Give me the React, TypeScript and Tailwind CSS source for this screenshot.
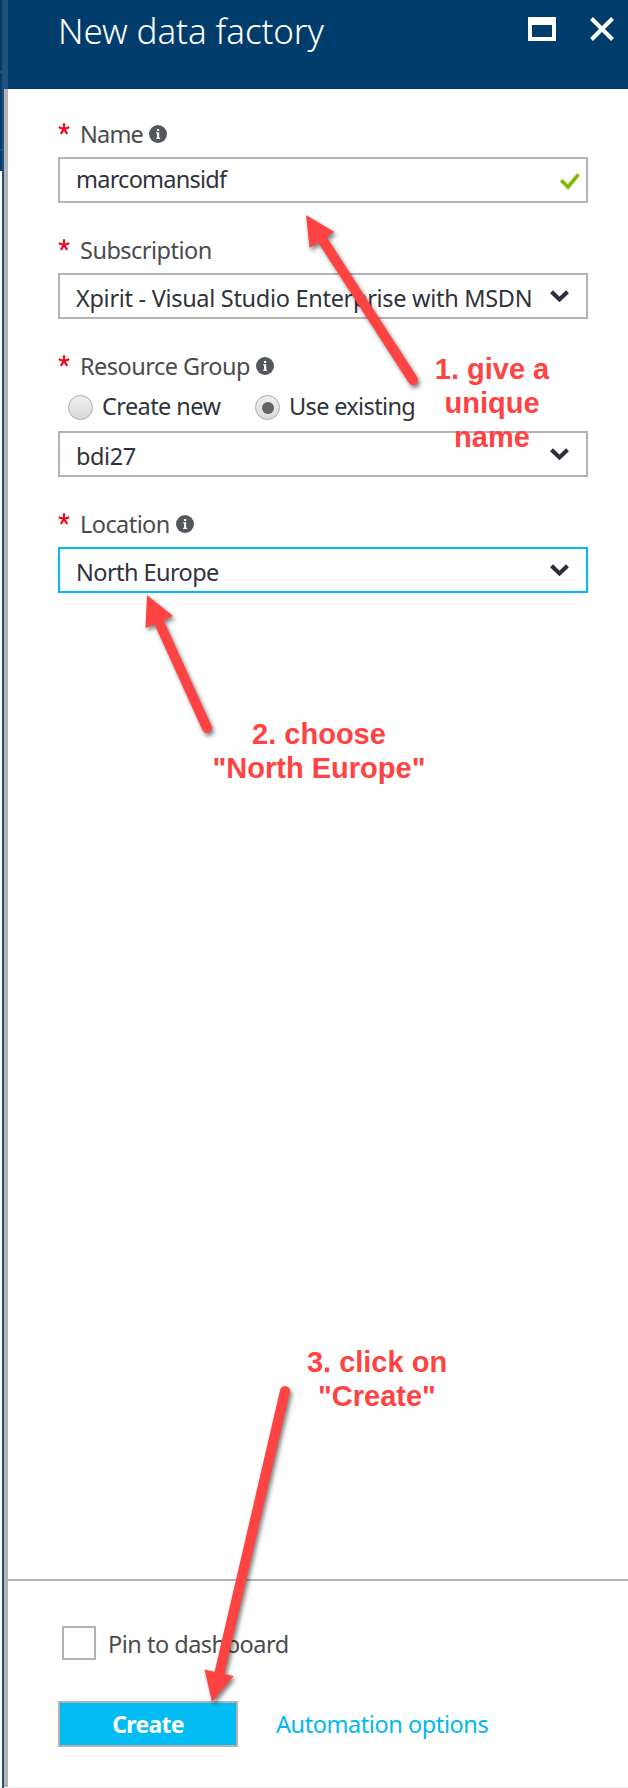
import React from "react";

const bodyFont = "font-['Noto_Sans',sans-serif]";

function InfoIcon({ className = "" }: { className?: string }) {
  return (
    <svg className={`h-[18px] w-[18px] shrink-0 ${className}`} viewBox="0 0 18 18">
      <circle cx="9" cy="9" r="9" fill="#54585e" />
      <path d="M8 4h2.200v2H8zM7.200 7.300h3v5.500h.9V14H7.200v-1.200H8V8.500h-.8z" fill="#fff" />
    </svg>
  );
}

function Chevron() {
  return (
    <svg className="h-3 w-[19px] shrink-0" viewBox="0 0 19 12">
      <path d="M1.500 1.800L9.500 9.400L17.500 1.800" fill="none" stroke="#2b303a" strokeWidth="4.200" />
    </svg>
  );
}

function Label({ text, spacing, info }: { text: string; spacing: string; info?: boolean }) {
  return (
    <div className="flex h-[46px] items-center text-[#4b4b4d]">
      <svg className="mb-[11px] h-3 w-3 shrink-0" viewBox="0 0 12 12">
        <path d="M6 6V.3M6 6L.7 4.200M6 6l5.300-1.800M6 6l-3.200 4.800M6 6l3.200 4.800" stroke="#f5041f" strokeWidth="2.200" fill="none" />
      </svg>
      <span className={`ml-[10px] whitespace-nowrap pt-0.5 text-[23.5px] ${spacing}`}>{text}</span>
      {info && <InfoIcon className="ml-1.5" />}
    </div>
  );
}

function Select({ value, spacing, active }: { value: string; spacing: string; active?: boolean }) {
  return (
    <div className={`flex h-[46px] items-center justify-between border-2 pl-4 pr-[17px] ${active ? "border-[#00bcf2]" : "border-[#b3b3b3]"}`}>
      <span className={`whitespace-nowrap pt-1 text-[23.5px] leading-8 ${spacing}`}>{value}</span>
      <Chevron />
    </div>
  );
}

function Radio({ label, spacing, checked, className = "" }: { label: string; spacing: string; checked?: boolean; className?: string }) {
  return (
    <div className={`flex items-center ${className}`}>
      <span className="mt-[3px] flex h-[25px] w-[25px] items-center justify-center rounded-full border border-[#ababab] bg-linear-to-b from-[#efefef] to-[#dadada]">
        {checked && <span className="h-3 w-3 rounded-full bg-[#636363]" />}
      </span>
      <span className={`ml-[9px] whitespace-nowrap text-[23.5px] leading-8 ${spacing}`}>{label}</span>
    </div>
  );
}

function Arrows() {
  return (
    <svg className="pointer-events-none absolute inset-0 h-[1788px] w-[628px] [filter:drop-shadow(2px_3px_2px_rgba(0,0,0,0.5))]" viewBox="0 0 628 1788">
      <g stroke="#ff4343" strokeWidth="10" strokeLinecap="round">
        <path d="M413 380L320 236" />
        <path d="M207 728L158 620" />
        <path d="M285 1391L219 1675" />
      </g>
      <g fill="#ff4343">
        <path d="M306 215L334.500 232L309.500 248Z" />
        <path d="M147 595L173 616L145.500 628Z" />
        <path d="M212 1702L204.500 1669.500L233.500 1676Z" />
      </g>
    </svg>
  );
}

function Note({ lines, className }: { lines: string[]; className: string }) {
  return (
    <div className={`absolute flex -translate-x-1/2 flex-col items-center whitespace-nowrap font-['Liberation_Sans',sans-serif] text-[29px] font-bold leading-[34px] text-[#ff4343] ${className}`}>
      {lines.map((line) => (
        <span key={line}>{line}</span>
      ))}
    </div>
  );
}

export default function App() {
  return (
    <div className={`relative flex h-[1788px] w-[628px] overflow-hidden bg-white text-[#2f333b] ${bodyFont}`}>
      <div className="flex w-0.5 flex-col">
        <div className="h-[71px] bg-[#003c6c]" />
        <div className="h-0.5 bg-[#1f517c]" />
        <div className="h-[76px] bg-[#003c6c]" />
        <div className="h-0.5 bg-[#1f517c]" />
        <div className="h-5 bg-[#003c6c]" />
      </div>
      <div className="w-0.5 bg-[#1f517c]" />
      <div className="flex w-1 flex-col">
        <div className="h-[89px] bg-[#1f517c]" />
        <div className="h-[1698px] bg-[#b3b3b3]" />
      </div>
      <div className="flex flex-1 flex-col border-b border-[#ececec]">
        <header className="flex h-[89px] items-start justify-between bg-[#003c6c] pl-[50px] pr-3.5 text-white">
          <h1 className="mt-[5px] whitespace-nowrap text-[35px] font-light leading-[52px] tracking-[-0.1px]">New data factory</h1>
          <div className="mt-[17px] flex gap-[34px]">
            <svg className="h-6 w-7" viewBox="0 0 28 24">
              <path d="M0 0H28V24H0ZM4 8V20H24V8Z" fill="#fff" fillRule="evenodd" />
            </svg>
            <svg className="h-6 w-6" viewBox="0 0 24 24">
              <path d="M1.500 1.500L22.500 22.500M22.500 1.500L1.500 22.500" stroke="#fff" strokeWidth="4" />
            </svg>
          </div>
        </header>
        <main className="flex flex-1 flex-col gap-6 pl-[50px] pr-10 pt-[22px]">
          <section>
            <Label text="Name" spacing="tracking-[-0.8px]" info />
            <div className="flex h-[46px] items-center justify-between border-2 border-[#b3b3b3] pl-4 pr-1.5">
              <span className="whitespace-nowrap pb-0.5 text-[23.5px] leading-8 tracking-[-0.76px]">marcomansidf</span>
              <svg className="mt-0.5 h-[17px] w-5" viewBox="0 0 20 17">
                <path d="M1.300 7.300L8 14L18.500 1.300" fill="none" stroke="#7fba00" strokeWidth="3.600" />
              </svg>
            </div>
          </section>
          <section>
            <Label text="Subscription" spacing="tracking-[-0.52px]" />
            <Select value="Xpirit - Visual Studio Enterprise with MSDN" spacing="tracking-[-0.3px]" />
          </section>
          <section>
            <Label text="Resource Group" spacing="tracking-[-0.53px]" info />
            <div className="flex h-[42px] items-center pb-2 pl-2.5">
              <Radio label="Create new" spacing="tracking-[-0.58px]" className="w-[187px]" />
              <Radio label="Use existing" spacing="tracking-[-0.65px]" checked />
            </div>
            <Select value="bdi27" spacing="tracking-[-0.4px]" />
          </section>
          <section>
            <Label text="Location" spacing="tracking-[-0.57px]" info />
            <Select value="North Europe" spacing="tracking-[-0.57px]" active />
          </section>
        </main>
        <footer className="flex h-[208px] flex-col border-t-2 border-[#b3b3b3] pl-[50px] pt-[45px]">
          <div className="flex h-[34px] items-center pl-1">
            <span className="h-[34px] w-[34px] border-2 border-[#b3b3b3]" />
            <span className="ml-3 whitespace-nowrap pt-0.5 text-[23.5px] leading-8 tracking-[-0.5px] text-[#4b4b4d]">Pin to dashboard</span>
          </div>
          <div className="mt-[41px] flex h-[46px] items-center">
            <button className="h-[46px] w-[180px] border-2 border-[#b3b3b3] bg-[#00bcf2] text-[23px] font-bold leading-[43px] tracking-[-0.75px] text-white">Create</button>
            <span className="ml-[38px] whitespace-nowrap text-[23.5px] leading-[46px] tracking-[-0.43px] text-[#00b7f0]">Automation options</span>
          </div>
        </footer>
      </div>
      <Arrows />
      <Note className="left-[492px] top-[352px]" lines={["1. give a", "unique", "name"]} />
      <Note className="left-[319px] top-[717px]" lines={["2. choose", '"North Europe"']} />
      <Note className="left-[377px] top-[1345px]" lines={["3. click on", '"Create"']} />
    </div>
  );
}
